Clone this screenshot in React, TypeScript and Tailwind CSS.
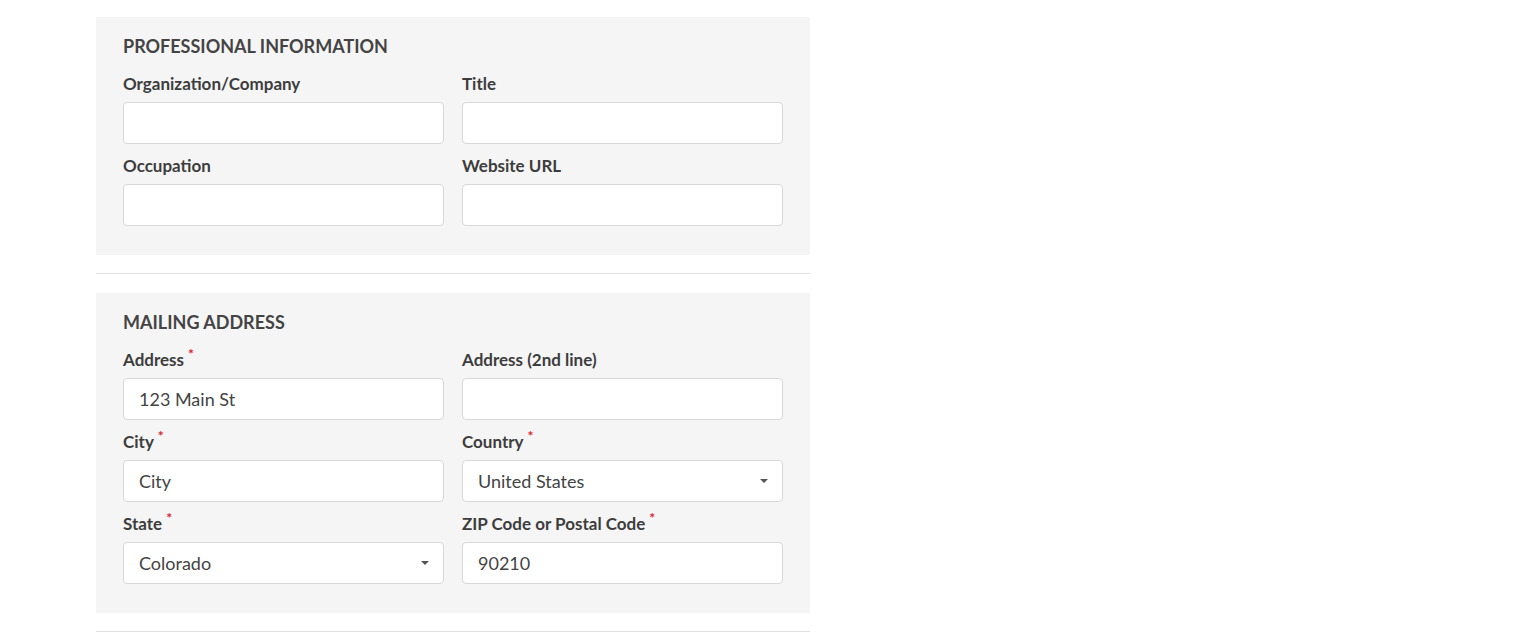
import type { ReactNode } from "react";

type Field = {
  label: string;
  required?: boolean;
  value?: string;
  select?: boolean;
};

const professional: Field[] = [
  { label: "Organization/Company" },
  { label: "Title" },
  { label: "Occupation" },
  { label: "Website URL" },
];

const mailing: Field[] = [
  { label: "Address", required: true, value: "123 Main St" },
  { label: "Address (2nd line)" },
  { label: "City", required: true, value: "City" },
  { label: "Country", required: true, value: "United States", select: true },
  { label: "State", required: true, value: "Colorado", select: true },
  { label: "ZIP Code or Postal Code", required: true, value: "90210" },
];

function Caret() {
  return (
    <svg
      className="pointer-events-none absolute right-[15px] top-[19px]"
      width="8"
      height="4"
      viewBox="0 0 8 4"
    >
      <path d="M0 0h8L4 4z" fill="#555" />
    </svg>
  );
}

function FormField({ f }: { f: Field }) {
  return (
    <div className="flex flex-col">
      <label className="mb-[6px] flex h-6 items-center text-[17px] font-bold leading-6 text-[#3d3d3d]">
        {f.label}
        {f.required && (
          <span className="relative -top-[6px] ml-[4px] text-[14px] leading-none text-[#d9232d]">*</span>
        )}
      </label>
      <div className="relative">
        {f.select ? (
          <>
            <select
              defaultValue={f.value}
              className="h-[42px] w-full appearance-none rounded-[4px] border border-[#d8d8d8] bg-white pl-[15px] pr-8 text-[18px] text-[#444] outline-none"
            >
              <option>{f.value}</option>
            </select>
            <Caret />
          </>
        ) : (
          <input
            defaultValue={f.value ?? ""}
            className="h-[42px] w-full rounded-[4px] border border-[#d8d8d8] bg-white px-[15px] text-[18px] text-[#444] outline-none"
          />
        )}
      </div>
    </div>
  );
}

function Panel({ title, children }: { title: string; children: ReactNode }) {
  return (
    <section className="bg-[#f5f5f5] px-[27px] pb-[29px] pt-[15px]">
      <h2 className="mb-[12px] h-7 text-[18px] font-bold leading-7 text-[#444]">{title}</h2>
      <div className="grid grid-cols-2 gap-x-[18px] gap-y-[10px]">{children}</div>
    </section>
  );
}

export default function App() {
  return (
    <div className="min-h-screen bg-white font-['Lato',sans-serif]">
      <div className="ml-[96px] w-[714px] pt-[17px]">
        <Panel title="PROFESSIONAL INFORMATION">
          {professional.map((f) => (
            <FormField key={f.label} f={f} />
          ))}
        </Panel>
        <hr className="mb-[19px] mt-[18px] border-t border-[#e0e0e0]" />
        <Panel title="MAILING ADDRESS">
          {mailing.map((f) => (
            <FormField key={f.label} f={f} />
          ))}
        </Panel>
        <hr className="mb-[19px] mt-[18px] border-t border-[#e0e0e0]" />
      </div>
    </div>
  );
}
